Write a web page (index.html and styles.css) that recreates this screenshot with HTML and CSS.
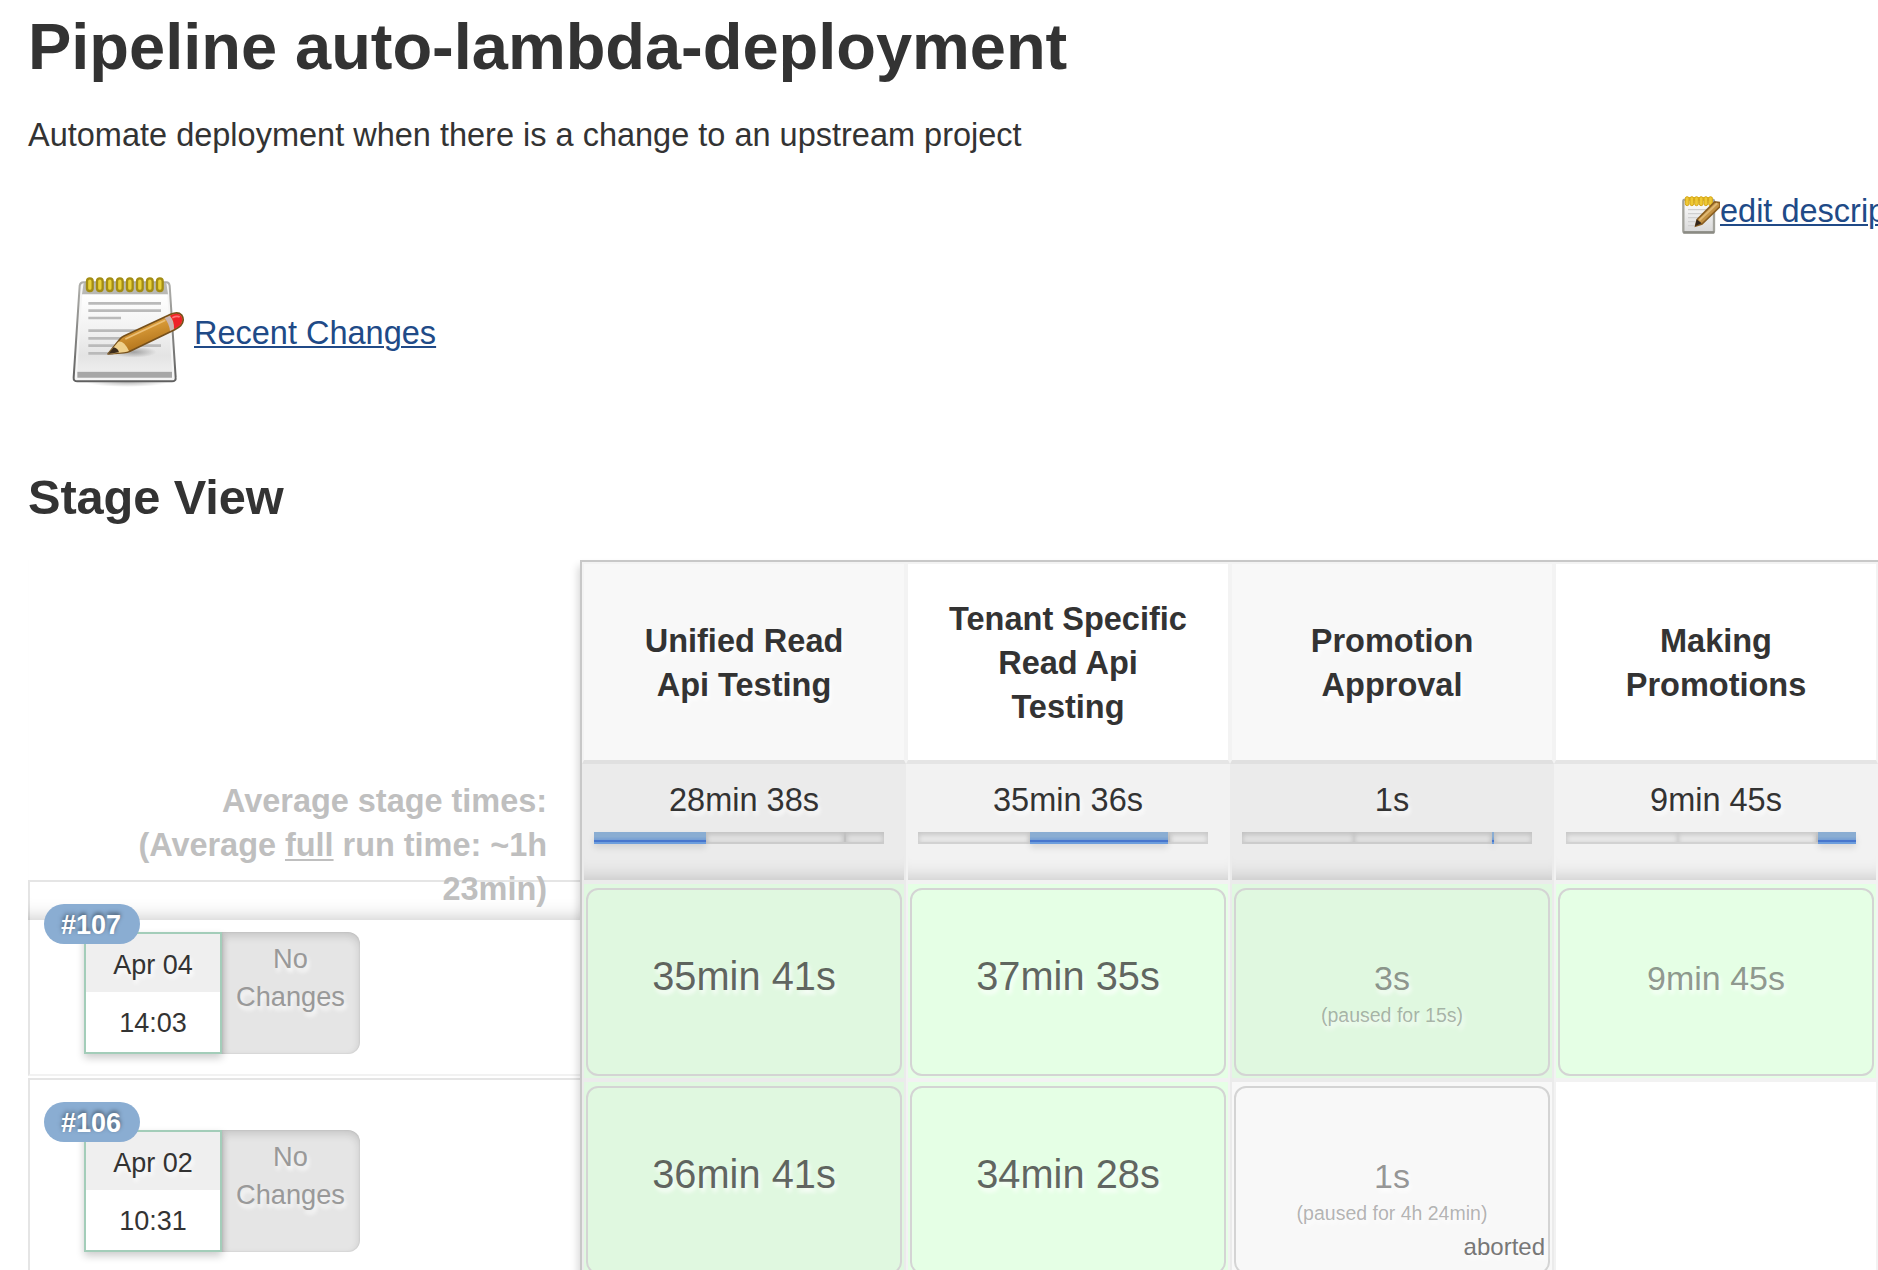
FILE: index.html
```html
<!DOCTYPE html>
<html lang="en">
<head>
<meta charset="utf-8">
<title>Pipeline auto-lambda-deployment</title>
<link rel="stylesheet" href="styles.css">
</head>
<body>
<main class="page">
  <h1 class="title">Pipeline auto-lambda-deployment</h1>
  <p class="description">Automate deployment when there is a change to an upstream project</p>

  <div class="edit">
    <svg class="edit-icon" viewBox="60 66 120 132" aria-hidden="true">
      <defs>
        <linearGradient id="sp" x1="0" y1="0" x2="0" y2="1"><stop offset="0" stop-color="#ffffff"/><stop offset="1" stop-color="#d8d8d8"/></linearGradient>
      </defs>
      <rect x="70" y="89" width="92" height="99" rx="5" fill="url(#sp)" stroke="#a3a39c" stroke-width="7"/>
      <path d="M70 187H163" stroke="#8b8b84" stroke-width="7"/>
      <path d="M84 119H140M84 131H132M84 143H122M84 155H112M84 167H108" stroke="#d0d0d0" stroke-width="4"/>
      <path d="M77 86H157" stroke="#e0b522" stroke-width="10"/>
      <g fill="#efc935" stroke="#d5a616" stroke-width="3">
        <rect x="76" y="80" width="11" height="27" rx="5.5"/><rect x="90" y="80" width="11" height="27" rx="5.5"/><rect x="104" y="80" width="11" height="27" rx="5.5"/><rect x="118" y="80" width="11" height="27" rx="5.5"/><rect x="132" y="80" width="11" height="27" rx="5.5"/><rect x="146" y="80" width="11" height="27" rx="5.5"/>
      </g>
      <path d="M107 168l5-20L164 96l16 2v12L126 162z" fill="#c39245" stroke="#8b5f22" stroke-width="5"/>
      <path d="M118 151L172 100" stroke="#dfb873" stroke-width="6"/>
      <path d="M105 169l5-21 15 12z" fill="#33261a"/>
    </svg><a class="link" href="#">edit description</a>
  </div>

  <div class="changes">
    <svg class="changes-icon" viewBox="60 51 360 360" aria-hidden="true">
      <defs>
        <linearGradient id="paper" x1="0" y1="0" x2="0" y2="1"><stop offset="0" stop-color="#ffffff"/><stop offset=".45" stop-color="#f2f2f2"/><stop offset=".8" stop-color="#e4e4e4"/><stop offset="1" stop-color="#ededed"/></linearGradient>
        <linearGradient id="frame" x1="0" y1="0" x2="0" y2="1"><stop offset="0" stop-color="#b0b0ac"/><stop offset="1" stop-color="#606060"/></linearGradient>
        <linearGradient id="wood" x1="0" y1="0" x2=".5" y2="1"><stop offset="0" stop-color="#e5ac52"/><stop offset=".5" stop-color="#d49635"/><stop offset="1" stop-color="#a86a14"/></linearGradient>
        <radialGradient id="shade"><stop offset="0" stop-color="#000" stop-opacity=".3"/><stop offset="1" stop-color="#000" stop-opacity="0"/></radialGradient>
      </defs>
      <ellipse cx="232" cy="380" rx="125" ry="16" fill="url(#shade)"/>
      <path d="M100 82H350Q357 82 359 92L377 368Q378 379 366 379H82Q70 379 71 368L89 92Q91 82 100 82Z" fill="#f5f5f5" stroke="url(#frame)" stroke-width="6"/>
      <path d="M101 84H349L354 118H96Z" fill="#b9b9b4"/>
      <path d="M97 119H352L366 348H82Z" fill="url(#paper)"/>
      <path d="M82 350H366V368H82Z" fill="#a7a7a7"/>
      <path d="M115 145H333M115 167H333M115 189H213M115 227H260M115 250H240M115 272H333M115 295H190" stroke="#bababa" stroke-width="8"/>
      <ellipse cx="250" cy="291" rx="70" ry="17" fill="url(#shade)"/>
      <g fill="#e6d03a" stroke="#a38d14" stroke-width="7">
        <rect x="111" y="70" width="17" height="38" rx="8.5"/><rect x="141" y="70" width="17" height="38" rx="8.5"/><rect x="171" y="70" width="17" height="38" rx="8.5"/><rect x="201" y="70" width="17" height="38" rx="8.5"/><rect x="231" y="70" width="17" height="38" rx="8.5"/><rect x="261" y="70" width="17" height="38" rx="8.5"/><rect x="291" y="70" width="17" height="38" rx="8.5"/><rect x="321" y="70" width="17" height="38" rx="8.5"/>
      </g>
      <path d="M174 297L210 252Q214 247 222 243L362 178Q384 168 395 180Q406 196 392 212Q386 218 374 224L240 289Q232 293 222 293Z" fill="url(#wood)" stroke="#76501b" stroke-width="5" stroke-linejoin="round"/>
      <path d="M174 297L205 260Q222 257 237 288Q231 291 222 292Z" fill="#efd08c"/>
      <path d="M174 297L191 277Q204 280 207 292Z" fill="#3c2c1b"/>
      <path d="M226 252L346 196" stroke="#ecc077" stroke-width="5"/>
      <path d="M344 189L360 182Q374 199 372 222L360 228Q358 207 344 189Z" fill="#c9b6b4"/>
      <path d="M360 182Q382 171 393 182Q402 196 390 210Q385 216 372 222Q374 199 360 182Z" fill="#ee2229"/>
      <path d="M367 188Q381 181 389 186" fill="none" stroke="#ff7376" stroke-width="5"/>
    </svg>
    <a class="link" href="#">Recent Changes</a>
  </div>

  <h2 class="subtitle">Stage View</h2>

  <section class="stage-view">
    <div class="runs">
      <div class="averages">Average stage times:<br>(Average <u>full</u> run time: ~1h<br>23min)</div>
      <div class="run">
        <span class="badge">#107</span>
        <div class="when"><span class="date">Apr 04</span><span class="time">14:03</span></div>
        <div class="nochange">No<br>Changes</div>
      </div>
      <div class="run">
        <span class="badge">#106</span>
        <div class="when"><span class="date">Apr 02</span><span class="time">10:31</span></div>
        <div class="nochange">No<br>Changes</div>
      </div>
    </div>

    <div class="stages">
      <div class="stage odd">
        <div class="name">Unified Read<br>Api Testing</div>
        <div class="avg"><span>28min 38s</span><div class="bar"><i class="on" style="width:112px"></i><i style="width:138px"></i><i style="width:2px"></i><i style="width:38px"></i></div></div>
        <div class="cell ok"><div class="box"><span class="big">35min 41s</span></div></div>
        <div class="cell ok"><div class="box"><span class="big">36min 41s</span></div></div>
      </div>
      <div class="stage">
        <div class="name">Tenant Specific<br>Read Api<br>Testing</div>
        <div class="avg"><span>35min 36s</span><div class="bar"><i style="width:112px"></i><i class="on" style="width:138px"></i><i style="width:2px"></i><i style="width:38px"></i></div></div>
        <div class="cell ok"><div class="box"><span class="big">37min 35s</span></div></div>
        <div class="cell ok"><div class="box"><span class="big">34min 28s</span></div></div>
      </div>
      <div class="stage odd">
        <div class="name">Promotion<br>Approval</div>
        <div class="avg"><span>1s</span><div class="bar"><i style="width:112px"></i><i style="width:138px"></i><i class="on" style="width:2px"></i><i style="width:38px"></i></div></div>
        <div class="cell ok"><div class="box"><span class="small">3s</span><span class="paused">(paused for 15s)</span></div></div>
        <div class="cell"><div class="box"><span class="small">1s</span><span class="paused">(paused for 4h 24min)</span><span class="status">aborted</span></div></div>
      </div>
      <div class="stage">
        <div class="name">Making<br>Promotions</div>
        <div class="avg"><span>9min 45s</span><div class="bar"><i style="width:112px"></i><i style="width:138px"></i><i style="width:2px"></i><i class="on" style="width:38px"></i></div></div>
        <div class="cell ok"><div class="box"><span class="small">9min 45s</span></div></div>
        <div class="cell"></div>
      </div>
    </div>
  </section>
</main>
</body>
</html>
```
FILE: styles.css
```css
* { box-sizing: border-box; }
html, body { margin: 0; height: 1270px; overflow: hidden; background: #fff; }
body { font: 32.5px/44px "Liberation Sans", Arial, Helvetica, sans-serif; color: #333; }

.page { width: 1878px; height: 1270px; overflow: hidden; padding: 8px 0 0 28px; }
.title { margin: 0; font-size: 65px; line-height: 78px; letter-spacing: -.03px; }
.description { margin: 27px 0 32px; }
.link { color: #204a87; text-decoration: underline; text-decoration-thickness: 2px; text-underline-offset: 2px; white-space: nowrap; }

.edit { display: flex; height: 44px; padding-left: 1652px; }
.edit-icon { flex: none; width: 40px; height: 44px; margin-top: 3px; }

.changes { display: flex; align-items: center; gap: 4px; margin: 39px 0 0 42px; height: 120px; }
.changes-icon { width: 120px; height: 120px; }
.changes .link { margin-top: 2px; }

.subtitle { margin: 75px 0 33px; font-size: 48.75px; line-height: 60px; letter-spacing: -.1px; }

.stage-view { display: flex; }
.runs { width: 552px; flex: none; }
.averages {
  position: relative; z-index: 1;
  height: 360px; margin-bottom: -40px; padding: 219px 33px 0 0;
  text-align: right; font-weight: bold; color: #bfbfbf; letter-spacing: -.04px;
  box-shadow: inset 0 -20px 20px -20px rgba(0,0,0,.25);
}
.averages u { text-decoration-thickness: 2px; text-underline-offset: 3px; }
.run {
  display: flex; position: relative;
  height: 196px; margin-bottom: 2px; padding: 50px 0 0 54px;
  border: 2px solid #e5e5e5; border-right: 0; border-bottom-color: #f2f2f2;
}
.badge {
  position: absolute; z-index: 2; left: 14px; top: 22px;
  width: 96px; height: 40px; padding-right: 2px; border-radius: 20px; background: #8aadd2;
  color: #fff; font-size: 27px; font-weight: bold; line-height: 42px; text-align: center;
  text-shadow: 0 -2px 4px rgba(0,0,0,.5);
}
.when {
  display: flex; flex-direction: column; position: relative; z-index: 1;
  width: 138px; height: 122px; border: 2px solid #a3cdb9; background: #fff;
  font-size: 27px; line-height: 62px; text-align: center;
  box-shadow: 0 4px 8px rgba(0,0,0,.2); text-shadow: 2px 4px 4px #fff;
}
.date { height: 58px; background: #efefef; }
.time { height: 60px; }
.nochange {
  width: 138px; height: 122px; padding: 8px 1px 0 0; border-radius: 0 12px 12px 0;
  background: #e5e5e5; color: #999; font-size: 27.2px; line-height: 38px; text-align: center;
  box-shadow: inset 0 4px 8px rgba(0,0,0,.14), inset 0 0 2px rgba(0,0,0,.12);
  text-shadow: 2px 4px 4px #fff;
}

.stages {
  display: flex; flex: none; position: relative; z-index: 3;
  border: solid #c8c8c8; border-width: 2px 0 0 2px;
  box-shadow: -2px 6px 8px rgba(0,0,0,.16);
  text-align: center; text-shadow: 2px 4px 4px rgba(255,255,255,.9);
}
.stage { width: 324px; --head: #fff; --avg: #f2f2f2; --ok: #e5ffe5; --line: #f2f2f2; --rule: #e5e5e5; }
.stage.odd { --head: #f8f8f8; --avg: #ebebeb; --ok: #e0f8e0; --line: #ebebeb; --rule: #e0e0e0; }
.name {
  display: flex; align-items: center; justify-content: center;
  height: 202px; padding-top: 1px; border: 2px solid #f3f3f3; border-bottom: 4px solid var(--rule);
  background: var(--head); font-weight: bold;
}
.avg {
  height: 118px; padding: 14px 10px 0; border: 2px solid var(--line); border-top: 0;
  background: var(--avg); box-shadow: inset 0 -20px 20px -20px rgba(0,0,0,.22);
}
.avg span { display: block; }
.bar { display: flex; width: 290px; margin-top: 10px; }
.bar i { height: 12px; border-bottom: 2px solid rgba(0,0,0,.1); background: rgba(0,0,0,.03); box-shadow: inset 0 2px 5px 1px rgba(0,0,0,.15); }
.bar i.on { border-bottom-color: #6c9ddd; background: linear-gradient(#8aadd2 0 45%, #759ed4 80%, #4776cd 81%) padding-box; box-shadow: 0 4px 6px rgba(0,0,0,.1); }
.cell { height: 198px; padding: 4px 2px 2px; border: 2px solid var(--line); background: var(--head); }
.cell.ok { background: var(--ok); }
.box { position: relative; height: 188px; padding-top: 64px; border: 2px solid #d4d4d4; border-radius: 12px; }
.box span { display: block; }
.big { font-size: 39.8px; line-height: 44px; color: rgba(51,51,51,.75); }
.small { padding-top: 2px; font-size: 34px; color: rgba(51,51,51,.52); }
.paused { padding-top: 1px; font-size: 19.5px; line-height: 28px; color: rgba(51,51,51,.37); }
.status { padding: 2px 3px 0 0; font-size: 24px; line-height: 36px; text-align: right; color: #777; }
```
